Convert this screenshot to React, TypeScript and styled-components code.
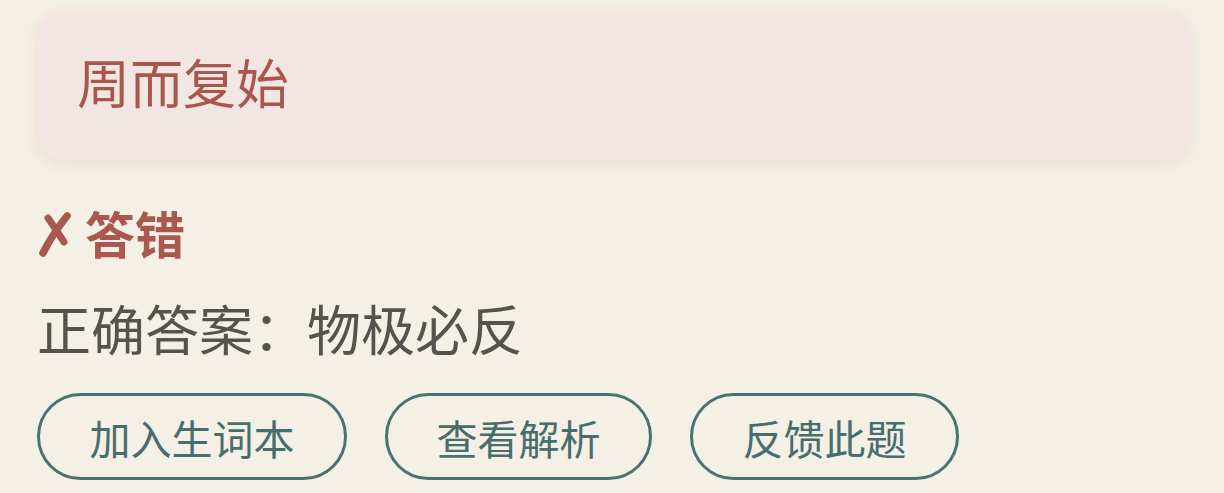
import React from 'react';
import styled, { createGlobalStyle } from 'styled-components';

const GlobalStyle = createGlobalStyle`
  html, body {
    margin: 0;
    padding: 0;
    background: #f4f0e5;
  }
  body {
    font-family: 'Noto Sans CJK SC', 'Noto Sans', sans-serif;
  }
`;

const Page = styled.div`
  width: 1224px;
  height: 493px;
  box-sizing: border-box;
  padding: 10px 34px 0 37px;
  overflow: hidden;
`;

const QuestionCard = styled.div`
  height: 150px;
  box-sizing: border-box;
  padding: 0 40px;
  display: flex;
  align-items: center;
  background: #f2e6e2;
  border-radius: 26px;
  box-shadow: 0 4px 14px rgba(200, 180, 150, 0.25);
`;

const QuestionText = styled.div`
  font-size: 53px;
  line-height: 1;
  color: #a9574e;
  margin-top: -7px;
`;

const ResultRow = styled.div`
  margin-top: 40px;
  display: flex;
  align-items: center;
  gap: 14px;
  color: #a9584f;
  height: 64px;
`;

const CrossIcon = styled.svg`
  width: 34px;
  height: 46px;
  flex-shrink: 0;
  margin-top: 6px;
`;

const ResultText = styled.span`
  font-size: 50px;
  font-weight: 700;
  line-height: 1;
`;

const AnswerLine = styled.div`
  margin-top: 37px;
  font-size: 54px;
  line-height: 1;
  color: #555350;
`;

const ButtonRow = styled.div`
  margin-top: 38px;
  display: flex;
  gap: 38px;
`;

const ActionButton = styled.button<{ $width: number }>`
  width: ${({ $width }) => $width}px;
  height: 87px;
  box-sizing: border-box;
  border: 3px solid #4b7271;
  border-radius: 44px;
  background: transparent;
  color: #476d6d;
  font-family: 'Noto Sans CJK SC', sans-serif;
  font-size: 41px;
  display: flex;
  align-items: center;
  justify-content: center;
  padding: 0;
  cursor: pointer;
`;

const actions = [
  { label: '加入生词本', width: 310 },
  { label: '查看解析', width: 267 },
  { label: '反馈此题', width: 269 },
];

const App: React.FC = () => {
  return (
    <>
      <GlobalStyle />
      <Page>
        <QuestionCard>
          <QuestionText>周而复始</QuestionText>
        </QuestionCard>
        <ResultRow>
          <CrossIcon viewBox="0 0 34 46">
            <path
              d="M11 6 C16 13 21 21 27 30"
              stroke="#a9584f"
              strokeWidth="7"
              strokeLinecap="round"
              fill="none"
            />
            <path
              d="M30 4 C22 14 13 27 6 41"
              stroke="#a9584f"
              strokeWidth="7.5"
              strokeLinecap="round"
              fill="none"
            />
          </CrossIcon>
          <ResultText>答错</ResultText>
        </ResultRow>
        <AnswerLine>正确答案：物极必反</AnswerLine>
        <ButtonRow>
          {actions.map((a) => (
            <ActionButton key={a.label} $width={a.width}>
              {a.label}
            </ActionButton>
          ))}
        </ButtonRow>
      </Page>
    </>
  );
};

export default App;
